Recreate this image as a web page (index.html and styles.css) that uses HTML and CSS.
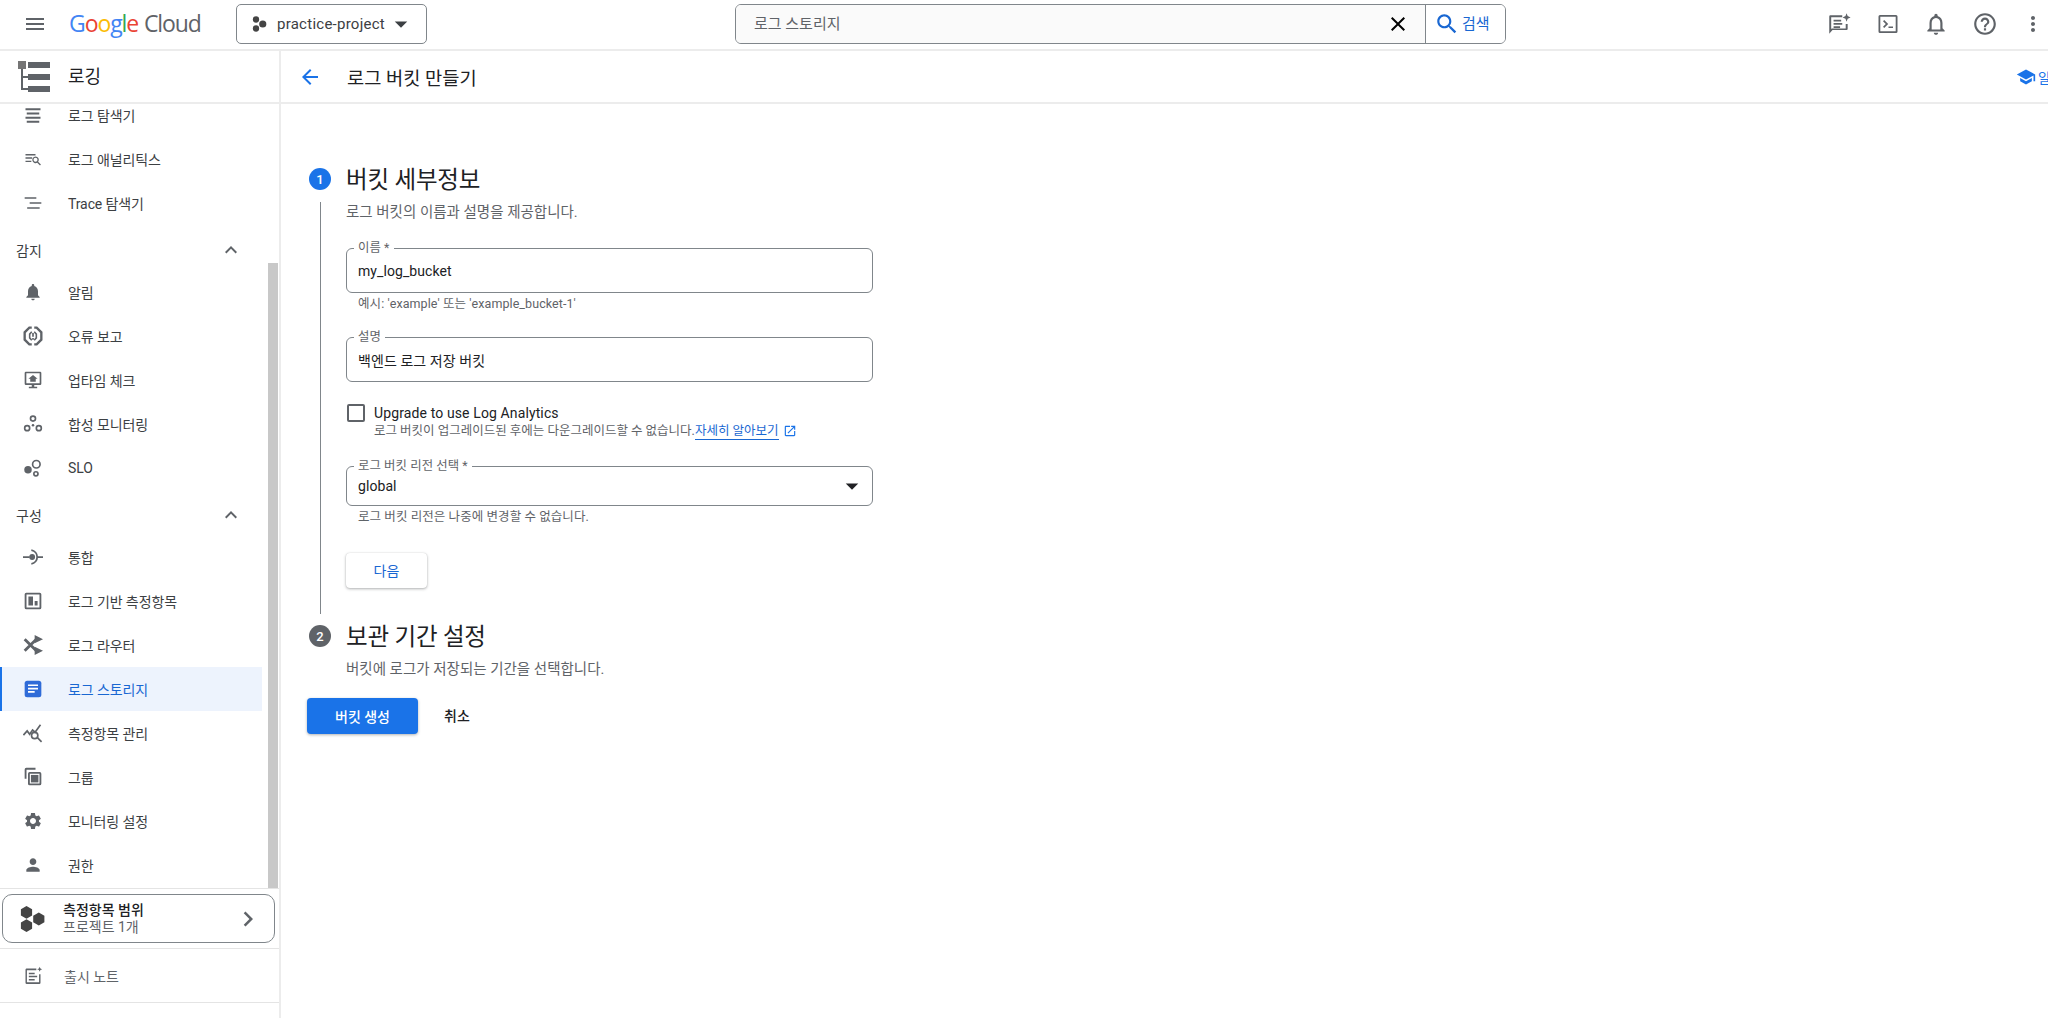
FILE: index.html
```html
<!DOCTYPE html>
<html lang="ko">
<head>
<meta charset="utf-8">
<title>로그 버킷 만들기</title>
<link rel="stylesheet" href="styles.css">
</head>
<body>
<svg class="sprite" width="0" height="0" aria-hidden="true">
  <symbol id="i-menu" viewBox="0 0 24 24"><path d="M3 18h18v-2H3v2zm0-5h18v-2H3v2zm0-7v2h18V6H3z"/></symbol>
  <symbol id="i-back" viewBox="0 0 24 24"><path d="M20 11H7.83l5.59-5.59L12 4l-8 8 8 8 1.41-1.41L7.83 13H20v-2z"/></symbol>
  <symbol id="i-close" viewBox="0 0 24 24"><path d="M19 6.41L17.59 5 12 10.59 6.41 5 5 6.41 10.59 12 5 17.59 6.41 19 12 13.41 17.59 19 19 17.59 13.41 12z"/></symbol>
  <symbol id="i-search" viewBox="0 0 24 24"><path d="M15.5 14h-.79l-.28-.27C15.41 12.59 16 11.11 16 9.5 16 5.91 13.09 3 9.5 3S3 5.91 3 9.5 5.91 16 9.5 16c1.61 0 3.09-.59 4.23-1.57l.27.28v.79l5 4.99L20.49 19l-4.99-5zm-6 0C7.01 14 5 11.99 5 9.5S7.01 5 9.5 5 14 7.01 14 9.5 11.99 14 9.5 14z"/></symbol>
  <symbol id="i-drop" viewBox="0 0 24 24"><path d="M7 10l5 5 5-5z"/></symbol>
  <symbol id="i-up" viewBox="0 0 24 24"><path d="M12 8l-6 6 1.41 1.41L12 10.83l4.59 4.58L18 14z"/></symbol>
  <symbol id="i-right" viewBox="0 0 24 24"><path d="M10 6L8.59 7.41 13.17 12l-4.58 4.59L10 18l6-6z"/></symbol>
  <symbol id="i-hex" viewBox="0 0 26 26"><path d="M6.500 0l5.600 3.200v6.400L6.500 12.800.9 9.600V3.200zM6.500 13.200l5.600 3.200v6.400L6.500 26 .9 22.800v-6.400zM18.800 6.600l5.600 3.200v6.400l-5.600 3.200-5.600-3.200V9.800z"/></symbol>
</svg>

<header class="topbar">
  <button class="icon-btn menu-btn" type="button"><svg class="ic24"><use href="#i-menu"/></svg></button>
  <div class="logo"><span class="g-b">G</span><span class="g-r">o</span><span class="g-y">o</span><span class="g-b">g</span><span class="g-g">l</span><span class="g-r">e</span> <span class="logo-cloud">Cloud</span></div>
  <button class="project" type="button">
    <svg class="ic18" viewBox="0 0 24 24"><circle cx="8" cy="6" r="4.200"/><circle cx="8" cy="18" r="4.200"/><circle cx="17" cy="12" r="4.800"/></svg>
    <span>practice-project</span>
    <svg class="ic30"><use href="#i-drop"/></svg>
  </button>
  <div class="search">
    <div class="search-input">
      <span class="search-text">로그 스토리지</span>
      <svg class="ic24 ic-black"><use href="#i-close"/></svg>
    </div>
    <button class="search-btn" type="button"><svg class="ic26"><use href="#i-search"/></svg><span>검색</span></button>
  </div>
  <div class="top-actions">
    <svg class="ic26 act-first" viewBox="0 0 24 24"><path d="M20 12v4.500a1 1 0 0 1-1 1H6L3 21V5a1 1 0 0 1 1-1h11v1.800H4.800v10.900l.6-.5H18.200V12z"/><path d="M7 8h7v1.700H7zM7 11h8v1.700H7zM7 14h6v1.700H7z"/><path d="M19 2l1 2.700L22.700 6 20 7.200 19 10l-1-2.800L15.300 6 18 4.700z"/></svg>
    <svg class="ic24" viewBox="0 0 24 24"><path d="M4 3h16a1.500 1.500 0 0 1 1.500 1.500v15A1.500 1.500 0 0 1 20 21H4a1.500 1.500 0 0 1-1.500-1.500v-15A1.500 1.500 0 0 1 4 3zm.3 1.800v14.400h15.400V4.800z"/><path d="M7 9.200L8.200 8l4 4-4 4L7 14.800 9.800 12zM12.500 14.500H17V16h-4.500z"/></svg>
    <svg class="ic26" viewBox="0 0 24 24"><path d="M12 22c1.100 0 2-.9 2-2h-4c0 1.100.9 2 2 2zm6-6v-5c0-3.070-1.630-5.640-4.500-6.320V4c0-.83-.67-1.500-1.500-1.500s-1.500.67-1.500 1.500v.68C7.640 5.360 6 7.920 6 11v5l-2 2v1h16v-1l-2-2zm-2 1H8v-6c0-2.480 1.510-4.500 4-4.500s4 2.020 4 4.500v6z"/></svg>
    <svg class="ic26" viewBox="0 0 24 24"><path d="M11 18h2v-2h-2v2zm1-16C6.480 2 2 6.480 2 12s4.480 10 10 10 10-4.480 10-10S17.520 2 12 2zm0 18c-4.410 0-8-3.590-8-8s3.590-8 8-8 8 3.590 8 8-3.590 8-8 8zm0-14c-2.210 0-4 1.790-4 4h2c0-1.100.9-2 2-2s2 .9 2 2c0 2-3 1.750-3 5h2c0-2.250 3-2.500 3-5 0-2.210-1.790-4-4-4z"/></svg>
    <svg class="ic24" viewBox="0 0 24 24"><path d="M12 8c1.100 0 2-.9 2-2s-.9-2-2-2-2 .9-2 2 .9 2 2 2zm0 2c-1.100 0-2 .9-2 2s.9 2 2 2 2-.9 2-2-.9-2-2-2zm0 6c-1.100 0-2 .9-2 2s.9 2 2 2 2-.9 2-2-.9-2-2-2z"/></svg>
  </div>
</header>

<div class="shell">
  <aside class="sidebar">
    <div class="side-head">
      <svg class="log-logo" viewBox="0 0 32 32"><rect x="0" y="0" width="8" height="8" fill="#757575"/><rect x="10" y="1" width="22" height="6"/><rect x="10" y="13" width="22" height="6"/><rect x="10" y="25" width="22" height="6"/><path d="M3 8h2v7h5v2H5v10h5v2H3z"/></svg>
      <span>로깅</span>
    </div>
    <div class="side-scroll">
      <nav class="side-list">
        <a class="item"><svg viewBox="0 0 24 24"><path d="M3 4h18v2.400H3zM4.500 9h15v2.400h-15zM3 14h18v2.400H3zM4.500 19h15v2.400h-15z"/></svg><span>로그 탐색기</span></a>
        <a class="item"><svg viewBox="0 0 24 24"><path d="M3 6h12v1.700H3zM3 10h8v1.700H3zM3 14h7v1.700H3z"/><path fill-rule="evenodd" d="M15 9a4 4 0 0 1 3.200 6.400l3.300 3.300-1.100 1.100-3.300-3.300A4 4 0 1 1 15 9zm0 1.600a2.400 2.400 0 1 0 0 4.800 2.400 2.400 0 0 0 0-4.800z"/></svg><span>로그 애널리틱스</span></a>
        <a class="item"><svg viewBox="0 0 24 24"><path d="M2 5h14v2H2zM8 11h14v2H8zM5 17h15v2H5z"/></svg><span>Trace 탐색기</span></a>
        <div class="group"><span>감지</span><svg class="ic24"><use href="#i-up"/></svg></div>
        <a class="item"><svg viewBox="0 0 24 24"><path d="M12 22c1.100 0 2-.9 2-2h-4c0 1.100.89 2 2 2zm6-6v-5c0-3.070-1.640-5.640-4.500-6.320V4c0-.83-.67-1.500-1.500-1.500s-1.500.67-1.500 1.500v.68C7.630 5.360 6 7.920 6 11v5l-2 2v1h16v-1l-2-2z"/></svg><span>알림</span></a>
        <a class="item"><svg viewBox="0 0 24 24"><g fill="none" stroke="#5f6368" stroke-width="2.800"><path d="M10.500 2H7.600L2 7.600v8.800L7.600 22h2.900M13.500 2h2.900L22 7.600v8.800L16.400 22h-2.900"/><path stroke-width="1.900" d="M10.500 7L8 9.800v4.400L10.500 17M13.500 7L16 9.800v4.400L13.500 17"/></g><path d="M11 8.500h2V13h-2zM11 14.500h2v2h-2z"/></svg><span>오류 보고</span></a>
        <a class="item"><svg viewBox="0 0 24 24"><path d="M3.500 2h17A1.500 1.500 0 0 1 22 3.500v13a1.500 1.500 0 0 1-1.500 1.500h-7v2H17v2H7v-2h3.500v-2h-7A1.500 1.500 0 0 1 2 16.500v-13A1.500 1.500 0 0 1 3.500 2zm.5 2v12h16V4z"/><path d="M12 6l5.500 4.500h-2.200V14H8.700v-3.500H6.500z"/></svg><span>업타임 체크</span></a>
        <a class="item"><svg viewBox="0 0 24 24"><g fill="none" stroke="#5f6368" stroke-width="2"><circle cx="12" cy="5.500" r="3"/><circle cx="5" cy="17" r="3"/><circle cx="19" cy="17" r="3"/></g><circle cx="12" cy="13.500" r="1.500"/></svg><span>합성 모니터링</span></a>
        <a class="item"><svg viewBox="0 0 24 24"><circle cx="6" cy="14" r="4.500"/><g fill="none" stroke="#5f6368" stroke-width="2"><circle cx="16" cy="7.500" r="4.500"/><circle cx="15.500" cy="19" r="2.500"/></g></svg><span>SLO</span></a>
        <div class="group"><span>구성</span><svg class="ic24"><use href="#i-up"/></svg></div>
        <a class="item"><svg viewBox="0 0 24 24"><path d="M0 11h8v2.200H0zM17 11h7v2.200h-7z"/><circle cx="11" cy="12" r="3.500"/><path fill="none" stroke="#5f6368" stroke-width="2.200" d="M10 3.800a8.300 8.300 0 0 1 0 16.400"/></svg><span>통합</span></a>
        <a class="item"><svg viewBox="0 0 24 24"><path d="M4 2h16a2 2 0 0 1 2 2v16a2 2 0 0 1-2 2H4a2 2 0 0 1-2-2V4a2 2 0 0 1 2-2zm.2 2.200v15.600h15.600V4.200z"/><path d="M6.500 6.500h5.500v11H6.500zM14 12h3.500v5.500H14z"/></svg><span>로그 기반 측정항목</span></a>
        <a class="item"><svg viewBox="0 0 24 24"><path fill="none" stroke="#5f6368" stroke-width="3.400" d="M2 5l14 14M2 19L16 5"/><path d="M14 0l10 5-10 5zM14 14l10 5-10 5z"/></svg><span>로그 라우터</span></a>
        <a class="item is-active"><svg viewBox="0 0 24 24"><rect x="2" y="2" width="20" height="20" rx="3"/><path fill="#fff" d="M6 6.500h12v2H6zM6 10.500h12v2H6zM6 14.500h8v2H6z"/></svg><span>로그 스토리지</span></a>
        <a class="item"><svg viewBox="0 0 24 24"><path fill="none" stroke="#5f6368" stroke-width="2" d="M0.500 14.500l4.500-5 3 4 3.500-5 3 2.500L21 2"/><circle cx="14" cy="15" r="3.800" fill="none" stroke="#5f6368" stroke-width="2"/><path d="M16.600 18.300l1.400-1.400 5 5-1.400 1.400z"/></svg><span>측정항목 관리</span></a>
        <a class="item"><svg viewBox="0 0 24 24"><path d="M4 1h11v2.200H4.200V14H2V3a2 2 0 0 1 2-2z"/><path d="M8 6h12a2 2 0 0 1 2 2v12a2 2 0 0 1-2 2H8a2 2 0 0 1-2-2V8a2 2 0 0 1 2-2zm.2 2.200v11.600h11.600V8.200z"/><path d="M9.500 9.500h9v9h-9z"/></svg><span>그룹</span></a>
        <a class="item"><svg viewBox="0 0 24 24"><path d="M19.140 12.940c.04-.3.06-.61.06-.94 0-.32-.02-.64-.07-.94l2.030-1.580c.18-.14.23-.41.12-.61l-1.920-3.320c-.12-.22-.37-.29-.59-.22l-2.390.96c-.5-.38-1.030-.7-1.620-.94l-.36-2.540c-.04-.24-.24-.41-.48-.41h-3.840c-.24 0-.43.17-.47.41l-.36 2.540c-.59.24-1.130.57-1.620.94l-2.390-.96c-.22-.08-.47 0-.59.22L2.740 8.870c-.12.21-.08.47.12.61l2.030 1.580c-.05.3-.09.63-.09.94s.02.64.07.94l-2.030 1.580c-.18.14-.23.41-.12.61l1.920 3.320c.12.22.37.29.59.22l2.390-.96c.5.38 1.030.7 1.620.94l.36 2.540c.05.24.24.41.48.41h3.840c.24 0 .44-.17.47-.41l.36-2.540c.59-.24 1.130-.56 1.620-.94l2.390.96c.22.08.47 0 .59-.22l1.920-3.320c.12-.22.07-.47-.12-.61l-2.010-1.580zM12 15.600c-1.980 0-3.600-1.620-3.600-3.600s1.620-3.600 3.600-3.600 3.600 1.620 3.600 3.600-1.620 3.600-3.600 3.600z"/></svg><span>모니터링 설정</span></a>
        <a class="item"><svg viewBox="0 0 24 24"><path d="M12 12c2.210 0 4-1.790 4-4s-1.790-4-4-4-4 1.790-4 4 1.790 4 4 4zm0 2c-2.670 0-8 1.340-8 4v2h16v-2c0-2.660-5.330-4-8-4z"/></svg><span>권한</span></a>
      </nav>
      <div class="scroll-thumb"></div>
    </div>
    <div class="scope-wrap">
      <button class="scope" type="button">
        <svg class="scope-hex"><use href="#i-hex"/></svg>
        <span class="scope-text"><b>측정항목 범위</b><small>프로젝트 1개</small></span>
        <svg class="ic30"><use href="#i-right"/></svg>
      </button>
    </div>
    <a class="notes"><svg viewBox="0 0 24 24"><path d="M4 3h12v2H4.700v14.600h14.600V10H21v10a1.500 1.500 0 0 1-1.500 1.500h-15A1.500 1.500 0 0 1 3 20V4.500A1.500 1.500 0 0 1 4 3z"/><path d="M7 8h7v1.800H7zM7 11.800h10v1.800H7zM7 15.600h7v1.800H7z"/><path d="M20 1l.9 2.100L23 4l-2.100.9L20 7l-.9-2.100L17 4l2.100-.9z"/></svg><span>출시 노트</span></a>
  </aside>

  <main class="content">
    <div class="title-bar">
      <svg class="ic24 ic-blue"><use href="#i-back"/></svg>
      <h1>로그 버킷 만들기</h1>
      <a class="learn"><svg class="ic20 ic-blue" viewBox="0 0 24 24"><path d="M5 13.180v4L12 21l7-3.820v-4L12 17l-7-3.820zM12 3L1 9l11 6 9-4.910V17h2V9L12 3z"/></svg><span>알아보기</span></a>
    </div>

    <form class="stepper">
      <div class="step-head">
        <span class="step-num is-current">1</span>
        <h2>버킷 세부정보</h2>
      </div>
      <div class="step-body">
        <p class="step-desc">로그 버킷의 이름과 설명을 제공합니다.</p>

        <div class="field field-name">
          <label class="field-label">이름 *</label>
          <span class="field-value">my_log_bucket</span>
        </div>
        <p class="hint">예시: 'example' 또는 'example_bucket-1'</p>

        <div class="field field-desc">
          <label class="field-label">설명</label>
          <span class="field-value">백엔드 로그 저장 버킷</span>
        </div>

        <div class="check">
          <span class="check-box"></span>
          <div class="check-text">
            <div class="check-label">Upgrade to use Log Analytics</div>
            <div class="check-sub">로그 버킷이 업그레이드된 후에는 다운그레이드할 수 없습니다.<a class="link">자세히 알아보기</a><svg class="ic-ext ic-blue" viewBox="0 0 24 24"><path d="M19 19H5V5h7V3H5c-1.110 0-2 .9-2 2v14c0 1.100.89 2 2 2h14c1.100 0 2-.9 2-2v-7h-2v7zM14 3v2h3.590l-9.830 9.830 1.410 1.410L19 6.410V10h2V3h-7z"/></svg></div>
          </div>
        </div>

        <div class="field field-region">
          <label class="field-label">로그 버킷 리전 선택 *</label>
          <span class="field-value">global</span>
          <svg class="ic30 ic-dark"><use href="#i-drop"/></svg>
        </div>
        <p class="hint">로그 버킷 리전은 나중에 변경할 수 없습니다.</p>

        <button class="btn-next" type="button">다음</button>
      </div>

      <div class="step-head step-two">
        <span class="step-num">2</span>
        <h2>보관 기간 설정</h2>
      </div>
      <p class="step-desc step-desc-two">버킷에 로그가 저장되는 기간을 선택합니다.</p>

      <div class="actions">
        <button class="btn-primary" type="button">버킷 생성</button>
        <button class="btn-text" type="button">취소</button>
      </div>
    </form>
  </main>
</div>
</body>
</html>
```

FILE: styles.css
```css
* { box-sizing: border-box; }
html, body { height: 100%; }
body {
  margin: 0;
  overflow: hidden;
  background: #fff;
  color: #202124;
  font-family: Roboto, "Noto Sans CJK KR", sans-serif;
  font-size: 14px;
}
button { font-family: inherit; }
p, h1, h2 { margin: 0; font-weight: 400; }
svg { fill: #5f6368; flex: none; display: block; }
.sprite { position: absolute; }
.ic18 { width: 18px; height: 18px; }
.ic20 { width: 20px; height: 20px; }
.ic24 { width: 24px; height: 24px; }
.ic26 { width: 26px; height: 26px; }
.ic30 { width: 30px; height: 30px; }
.ic-black { fill: #000; }
.ic-dark { fill: #202124; }
.ic-blue { fill: #1a73e8; }

/* top bar */
.topbar {
  height: 51px;
  display: flex;
  align-items: center;
  border-bottom: 2px solid #ececec;
  padding: 0 0 1px 23px;
}
.icon-btn { border: 0; background: none; padding: 0; width: 24px; height: 24px; }
.logo {
  margin: -2px 0 0 22px;
  width: 167px;
  font-family: "Open Sans", sans-serif;
  font-size: 23px;
  letter-spacing: -1.100px;
  white-space: nowrap;
}
.g-b { color: #4285f4; }
.g-r { color: #ea4335; }
.g-y { color: #fbbc05; }
.g-g { color: #34a853; }
.logo-cloud { color: #5f6368; margin-left: 1px; }
.project {
  width: 191px;
  height: 40px;
  display: flex;
  align-items: center;
  background: #fff;
  border: 1px solid #80868b;
  border-radius: 5px;
  padding: 0 0 0 13px;
  color: #3c4043;
  font-size: 15px;
  letter-spacing: .25px;
}
.project .ic18 { fill: #444; }
.project span { margin-left: 9px; }
.project .ic30 { margin-left: 1px; fill: #3c4043; }
.search {
  margin-left: 308px;
  width: 771px;
  height: 40px;
  display: flex;
  border: 1px solid #80868b;
  border-radius: 6px;
  overflow: hidden;
}
.search-input {
  flex: 1;
  display: flex;
  align-items: center;
  justify-content: space-between;
  padding: 0 15px 0 18px;
  background: #fafafa;
  color: #5f6368;
  font-size: 15px;
  border-right: 1px solid #80868b;
}
.search-text { margin-bottom: 3px; }
.search-btn {
  width: 79px;
  display: flex;
  align-items: center;
  gap: 2px;
  padding: 0 0 0 8px;
  border: 0;
  background: #fff;
  color: #1967d2;
  font-size: 15px;
}
.search-btn span { margin-bottom: 3px; }
.search-btn svg { fill: #1967d2; }
.top-actions {
  margin-left: auto;
  display: flex;
  align-items: center;
  gap: 23px;
  padding-right: 3px;
}
.act-first { margin-right: 1px; }

/* shell */
.shell { display: flex; height: calc(100% - 51px); }
.sidebar {
  width: 281px;
  flex: none;
  display: flex;
  flex-direction: column;
  border-right: 2px solid #ececec;
}
.side-head {
  height: 53px;
  flex: none;
  display: flex;
  align-items: center;
  gap: 18px;
  padding-left: 18px;
  border-bottom: 2px solid #ececec;
  font-size: 18px;
}
.side-head span { margin-bottom: 3px; }
.log-logo { width: 32px; height: 32px; fill: #5f6368; }
.side-scroll {
  flex: 1;
  min-height: 0;
  position: relative;
  overflow: hidden;
}
.side-list {
  margin-top: -11px;
  width: 262px;
  display: flex;
  flex-direction: column;
}
.item {
  height: 44px;
  flex: none;
  display: flex;
  align-items: center;
  gap: 25px;
  padding-left: 23px;
  color: #3c4043;
  letter-spacing: -.1px;
}
.item svg { width: 20px; height: 20px; }
.item.is-active {
  background: #edf3fd;
  box-shadow: inset 2px 0 0 #1a73e8;
  color: #1967d2;
}
.item.is-active svg { fill: #2f6bd8; }
.group {
  height: 45px;
  flex: none;
  display: flex;
  align-items: center;
  justify-content: space-between;
  padding: 5px 19px 0 16px;
  color: #3c4043;
}
.scroll-thumb {
  position: absolute;
  top: 159px;
  bottom: 0;
  left: 268px;
  width: 10px;
  background: #c8c8c8;
}
.scope-wrap {
  height: 61px;
  flex: none;
  padding: 5px 4px 5px 2px;
  border-top: 1px solid #e4e4e4;
  border-bottom: 1px solid #e4e4e4;
}
.scope {
  width: 100%;
  height: 49px;
  display: flex;
  align-items: center;
  background: #fff;
  border: 1px solid #80868b;
  border-radius: 10px;
  padding: 0 11px 0 17px;
  text-align: left;
}
.scope-hex { width: 26px; height: 26px; fill: #444; }
.scope-text {
  flex: 1;
  margin-left: 17px;
  display: flex;
  flex-direction: column;
  line-height: 17px;
  font-size: 14px;
}
.scope-text b { font-weight: 500; color: #202124; }
.scope-text small { font-size: 14px; color: #5f6368; }
.notes {
  height: 54px;
  flex: none;
  display: flex;
  align-items: center;
  gap: 21px;
  padding-left: 23px;
  color: #5f6368;
  border-bottom: 1px solid #e4e4e4;
}
.notes svg { width: 20px; height: 20px; }
.sidebar::after { content: ""; height: 15px; flex: none; }

/* content */
.content { flex: 1; min-width: 0; overflow: hidden; }
.title-bar {
  height: 53px;
  display: flex;
  align-items: center;
  padding-left: 17px;
  border-bottom: 2px solid #ececec;
}
.title-bar h1 { margin-left: 25px; font-size: 18.700px; color: #202124; }
.learn {
  margin-left: auto;
  display: flex;
  align-items: center;
  gap: 2px;
  width: 32px;
  white-space: nowrap;
  color: #1a73e8;
  font-size: 14px;
  flex: none;
}
.stepper { padding: 59px 0 0 26px; }
.step-head { height: 32px; display: flex; align-items: center; }
.step-head h2 {
  margin: -2px 0 0 15px;
  font-size: 23.500px;
  color: #202124;
  letter-spacing: -.2px;
}
.step-num {
  width: 22px;
  height: 22px;
  margin-left: 2px;
  border-radius: 50%;
  background: #5f6368;
  color: #fff;
  font-size: 13px;
  font-weight: 500;
  display: flex;
  align-items: center;
  justify-content: center;
}
.step-num.is-current { background: #1a73e8; }
.step-body {
  margin: 7px 0 0 13px;
  padding: 1px 0 26px 25px;
  border-left: 1px solid #80868b;
  height: 412px;
}
.step-desc { line-height: 20px; color: #5f6368; font-size: 14.500px; }
.field {
  position: relative;
  width: 527px;
  border: 1px solid #80868b;
  border-radius: 6px;
  padding: 0 0 0 11px;
  display: flex;
  align-items: center;
  justify-content: space-between;
  color: #202124;
  letter-spacing: .07px;
}
.field-label {
  position: absolute;
  left: 7px;
  top: -8px;
  padding: 0 4px;
  background: #fff;
  font-size: 12.400px;
  line-height: 14px;
  color: #5f6368;
}
.field-name { height: 45px; margin-top: 25px; }
.field-desc { height: 45px; margin-top: 25px; }
.field-region { height: 40px; margin-top: 26px; padding-right: 5px; }
.hint { margin: 3px 0 0 12px; font-size: 12.500px; line-height: 16px; color: #5f6368; letter-spacing: .08px; }
.check { display: flex; margin-top: 22px; }
.check-box {
  width: 18px;
  height: 18px;
  margin: 0 9px 0 1px;
  flex: none;
  border: 2px solid #5f6368;
  border-radius: 2px;
}
.check-label { line-height: 18px; color: #202124; letter-spacing: .12px; }
.check-sub { display: flex; align-items: center; line-height: 18px; font-size: 12.500px; color: #5f6368; }
.link { color: #1967d2; border-bottom: 1px solid #1967d2; line-height: 16px; }
.ic-ext { width: 14px; height: 14px; margin-left: 4px; }
.btn-next {
  display: block;
  margin-top: 28px;
  width: 81px;
  height: 35px;
  padding-bottom: 2px;
  background: #fff;
  border: 0;
  border-radius: 4px;
  color: #1967d2;
  font-size: 14px;
  box-shadow: 0 1px 3px rgba(60, 64, 67, .4), 0 0 1px rgba(60, 64, 67, .2);
}
.step-two { margin-top: 6px; }
.step-desc-two { margin: 8px 0 0 39px; }
.actions { margin-top: 18px; display: flex; align-items: center; }
.btn-primary {
  width: 111px;
  height: 36px;
  padding-bottom: 2px;
  border: 0;
  border-radius: 4px;
  background: #1a73e8;
  color: #fff;
  font-size: 14px;
  font-weight: 500;
  box-shadow: 0 1px 3px rgba(60, 64, 67, .4);
}
.btn-text {
  margin-left: 13px;
  width: 52px;
  height: 36px;
  padding-bottom: 3px;
  border: 0;
  background: none;
  color: #202124;
  font-size: 14px;
  font-weight: 500;
}
```
